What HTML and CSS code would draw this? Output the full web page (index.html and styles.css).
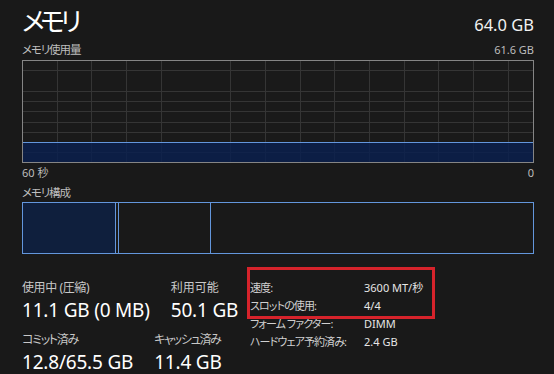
FILE: index.html
```html
<!DOCTYPE html>
<html lang="ja">
<head>
<meta charset="utf-8">
<title>メモリ</title>
<link rel="stylesheet" href="styles.css">
</head>
<body>
<div class="page">
  <div class="head">
    <h1 class="title">メモリ</h1>
    <div class="total">64.0 GB</div>
  </div>
  <div class="caption-row">
    <span class="jp">メモリ使用量</span>
    <span>61.6 GB</span>
  </div>
  <div class="graph">
    <div class="graph-fill"></div>
  </div>
  <div class="axis">
    <span>60 秒</span>
    <span>0</span>
  </div>
  <div class="caption jp">メモリ構成</div>
  <div class="comp">
    <div class="seg seg-used" style="width:94px"></div>
    <div class="seg" style="width:4px"></div>
    <div class="seg" style="width:93px"></div>
    <div class="seg seg-free"></div>
  </div>
  <div class="stats">
    <div class="stats-left">
      <div class="stat-row">
        <div class="stat">
          <div class="stat-label tight-1">使用中 (圧縮)</div>
          <div class="stat-value">11.1 GB (0 MB)</div>
        </div>
        <div class="stat">
          <div class="stat-label">利用可能</div>
          <div class="stat-value">50.1 GB</div>
        </div>
      </div>
      <div class="stat-row">
        <div class="stat">
          <div class="stat-label tight-2">コミット済み</div>
          <div class="stat-value">12.8/65.5 GB</div>
        </div>
        <div class="stat">
          <div class="stat-label tight-2">キャッシュ済み</div>
          <div class="stat-value">11.4 GB</div>
        </div>
      </div>
    </div>
    <dl class="props">
      <dt>速度:</dt><dd>3600 MT/秒</dd>
      <dt>スロットの使用:</dt><dd>4/4</dd>
      <dt>フォーム ファクター:</dt><dd>DIMM</dd>
      <dt>ハードウェア予約済み:</dt><dd>2.4 GB</dd>
    </dl>
  </div>
  <div class="highlight"></div>
</div>
</body>
</html>
```

FILE: styles.css
```css
html, body {
  margin: 0;
  padding: 0;
  background: #191919;
}

body {
  font-family: "Noto Sans", "Noto Sans CJK JP", sans-serif;
  font-feature-settings: "palt";
  color: #c4c4c4;
}

.page {
  position: relative;
  width: 554px;
  height: 374px;
  box-sizing: border-box;
  padding: 0 20px 0 22px;
  overflow: hidden;
}

.head {
  display: flex;
  justify-content: space-between;
  align-items: baseline;
  height: 42px;
  padding-top: 3px;
  box-sizing: border-box;
}

.title {
  margin: 0;
  font-size: 26px;
  font-weight: 400;
  line-height: 36px;
  letter-spacing: -4.5px;
  color: #ffffff;
}

.total {
  font-size: 16.5px;
  color: #f2f2f2;
  line-height: 20px;
}

.caption-row {
  display: flex;
  justify-content: space-between;
  align-items: baseline;
  height: 18px;
  font-size: 11px;
  line-height: 16px;
  color: #bdbdbd;
}

.jp {
  font-size: 11.5px;
  letter-spacing: -1.1px;
}

.graph {
  display: flex;
  flex-direction: column;
  height: 103px;
  box-sizing: border-box;
  border: 1px solid #858585;
  background-color: #1a1a1a;
  background-image:
    repeating-linear-gradient(to right, transparent 0 33.7px, #353535 33.7px 34.7px),
    repeating-linear-gradient(to bottom, transparent 0 9.25px, #353535 9.25px 10.25px);
}

.graph-fill {
  margin-top: auto;
  height: 20px;
  box-sizing: border-box;
  border-top: 1px solid #6396dc;
  background: rgba(10, 32, 78, 0.85);
}

.axis {
  display: flex;
  justify-content: space-between;
  height: 20px;
  padding-top: 2px;
  box-sizing: border-box;
  font-size: 11px;
  line-height: 16px;
  color: #bdbdbd;
}

.caption {
  height: 19px;
  padding-top: 2px;
  box-sizing: border-box;
  line-height: 16px;
  color: #bdbdbd;
}

.comp {
  display: flex;
  height: 52px;
}

.seg {
  box-sizing: border-box;
  border: 1px solid #6396dc;
  margin-left: -1px;
}

.seg:first-child {
  margin-left: 0;
}

.seg-used {
  background: #0f1f3d;
}

.seg-free {
  flex: 1;
}

.stats {
  display: flex;
  margin-top: 25px;
}

.stats-left {
  width: 228px;
  display: flex;
  flex-direction: column;
  gap: 10px;
}

.stat-row {
  display: flex;
  gap: 21px;
}

.stat-label {
  font-size: 12px;
  line-height: 18px;
  color: #c8c8c8;
  white-space: nowrap;
}

.tight-1 {
  letter-spacing: -0.4px;
}

.tight-2 {
  letter-spacing: -1.3px;
}

.stat-value {
  margin-top: 2px;
  font-size: 19px;
  line-height: 22px;
  letter-spacing: -0.2px;
  color: #ffffff;
  white-space: nowrap;
}

.props {
  margin: 0;
  display: grid;
  grid-template-columns: 114px auto;
  grid-auto-rows: 18px;
  font-size: 11px;
  line-height: 18px;
  color: #d0d0d0;
}

.props dt,
.props dd {
  margin: 0;
  white-space: nowrap;
}

.props dt {
  letter-spacing: -0.9px;
}

.props dd {
  color: #e6e6e6;
}

.highlight {
  position: absolute;
  left: 247px;
  top: 267px;
  width: 188px;
  height: 52px;
  box-sizing: border-box;
  border: 3px solid #d6232b;
}
```
